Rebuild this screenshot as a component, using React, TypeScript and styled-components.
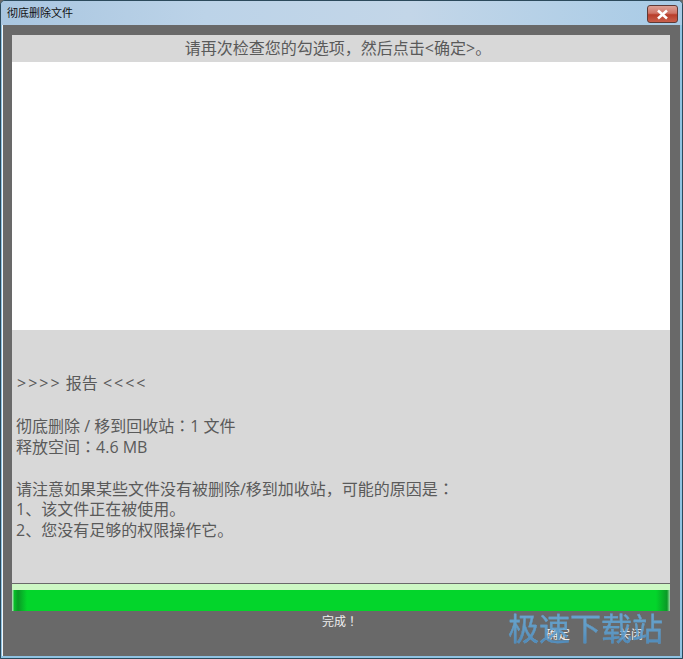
import React from 'react';
import styled, { createGlobalStyle } from 'styled-components';

const Global = createGlobalStyle`
  html, body { margin: 0; padding: 0; background: #6a6a6a; }
  body { width: 683px; height: 659px; overflow: hidden; }
`;

const Win = styled.div`
  position: relative;
  box-sizing: border-box;
  width: 683px;
  height: 659px;
  display: flex;
  flex-direction: column;
  border: 1px solid #2c4a5c;
  border-radius: 5px 5px 0 0;
  background: #8fc3e2;
  font-family: "Open Sans", "Noto Sans CJK SC", sans-serif;
  overflow: hidden;
`;

const TitleBar = styled.div`
  height: 24px;
  flex: none;
  display: flex;
  align-items: center;
  justify-content: space-between;
  padding: 0 4px 0 6px;
  background: linear-gradient(90deg, #a9c6e0 0%, #bcd3e8 30%, #c3d6e8 60%, #a8cbe6 100%);
`;

const Title = styled.span`
  font-family: "Noto Sans CJK SC", sans-serif;
  font-size: 11px;
  color: #111;
  margin-top: -2px;
`;

const CloseBtn = styled.div`
  box-sizing: border-box;
  width: 31px;
  height: 18px;
  margin-top: 2px;
  display: flex;
  align-items: center;
  justify-content: center;
  border: 1px solid #5e3a36;
  border-radius: 3px;
  background: linear-gradient(180deg, #dca196 0%, #cf7466 45%, #b83d2a 55%, #c8604c 100%);
`;

const Frame = styled.div`
  flex: 1;
  display: flex;
  flex-direction: column;
  margin: 0 2px 2px 2px;
  padding: 10px 10px 0 9px;
  background: #696969;
  box-shadow: -1px 0 0 #f2f6f9;
`;

const Header = styled.div`
  height: 27px;
  flex: none;
  box-sizing: border-box;
  padding: 0 6px 1px 0;
  display: flex;
  align-items: center;
  justify-content: center;
  background: #d8d8d8;
  color: #5a5a5a;
  font-size: 16px;
  line-height: 24px;
`;

const List = styled.div`
  height: 268px;
  flex: none;
  background: #fff;
`;

const Report = styled.div`
  height: 253px;
  flex: none;
  box-sizing: border-box;
  padding: 43px 4px 0 4px;
  background: #d8d8d8;
  color: #5a5a5a;
  font-size: 16px;
  line-height: 21px;
`;

const Line = styled.div`
  height: 21px;
  white-space: pre;
`;

// colon and exclamation sit centred in their cell in the original font
const Punct = styled.span`
  font-family: "Noto Sans CJK JP", sans-serif;
`;

const Arrows = styled.span`
  letter-spacing: 2px;
  margin-left: 1px;
`;

const Progress = styled.div`
  height: 27px;
  flex: none;
  box-sizing: border-box;
  margin-top: 1px;
  border-top: 6px solid #cdf7c4;
  background: linear-gradient(
    90deg,
    #9fdca8 0,
    #9fdca8 1px,
    #06c428 2px,
    #0a9a26 6px,
    #03d52b 15px,
    #03d52b calc(100% - 14px),
    #0a9a26 calc(100% - 3px),
    #9fdca8 100%
  );
`;

const Footer = styled.div`
  flex: 1;
  display: grid;
  grid-template-columns: 1fr auto 1fr;
  padding-top: 2px;
`;

const Done = styled.div`
  grid-column: 2;
  margin-right: 2px;
  color: #eee;
  font-size: 12px;
  line-height: 16px;
`;

const Buttons = styled.div`
  display: flex;
  justify-content: flex-end;
  gap: 49px;
  padding: 14px 27px 0 0;
`;

const BtnLabel = styled.span`
  color: #eee;
  font-size: 12px;
  line-height: 16px;
`;

const Watermark = styled.div`
  position: absolute;
  right: 19px;
  bottom: 13px;
  font-size: 31px;
  line-height: 36px;
  font-family: "Noto Sans CJK SC", sans-serif;
  background: linear-gradient(180deg, #6db0dd 0%, #5f9fce 60%, #4b8cc2 100%);
  -webkit-background-clip: text;
  background-clip: text;
  color: transparent;
  -webkit-text-stroke: 0.3px #5f9fce;
  opacity: 0.9;
`;

export default function App() {
  return (
    <Win>
      <Global />
      <TitleBar>
        <Title>彻底删除文件</Title>
        <CloseBtn>
          <svg width="13" height="11" viewBox="0 0 13 11">
            <path d="M2 1.5 L11 9.5 M11 1.5 L2 9.5" stroke="#fff" strokeWidth="2.6" />
          </svg>
        </CloseBtn>
      </TitleBar>
      <Frame>
        <Header>请再次检查您的勾选项，然后点击&lt;确定&gt;。</Header>
        <List />
        <Report>
          <Line><Arrows>{'>>>>'}</Arrows> 报告 <Arrows>{'<<<<'}</Arrows></Line>
          <Line />
          <Line>彻底删除 / 移到回收站<Punct>：</Punct>1 文件</Line>
          <Line>释放空间<Punct>：</Punct>4.6 MB</Line>
          <Line />
          <Line>请注意如果某些文件没有被删除/移到加收站，可能的原因是<Punct>：</Punct></Line>
          <Line>1、该文件正在被使用。</Line>
          <Line>2、您没有足够的权限操作它。</Line>
        </Report>
        <Progress />
        <Footer>
          <Done>完成<Punct>！</Punct></Done>
          <Buttons>
            <BtnLabel>确定</BtnLabel>
            <BtnLabel>关闭</BtnLabel>
          </Buttons>
        </Footer>
      </Frame>
      <Watermark>极速下载站</Watermark>
    </Win>
  );
}
